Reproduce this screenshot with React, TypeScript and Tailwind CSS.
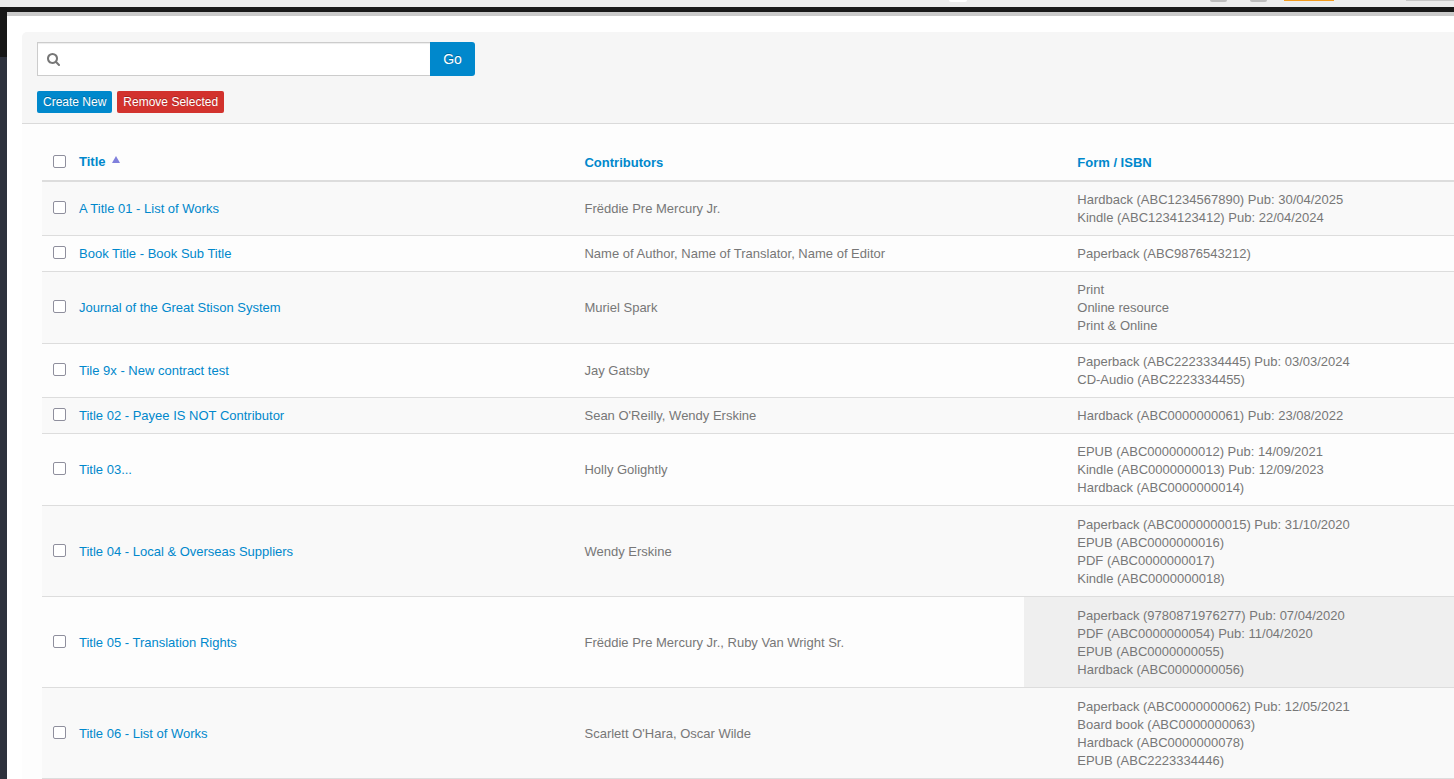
import { useState } from "react";

type Work = { title: string; contributors: string; forms: string[] };

const works: Work[] = [
  {
    title: "A Title 01 - List of Works",
    contributors: "Frëddie Pre Mercury Jr.",
    forms: ["Hardback (ABC1234567890) Pub: 30/04/2025", "Kindle (ABC1234123412) Pub: 22/04/2024"],
  },
  {
    title: "Book Title - Book Sub Title",
    contributors: "Name of Author, Name of Translator, Name of Editor",
    forms: ["Paperback (ABC9876543212)"],
  },
  {
    title: "Journal of the Great Stison System",
    contributors: "Muriel Spark",
    forms: ["Print", "Online resource", "Print & Online"],
  },
  {
    title: "Tile 9x - New contract test",
    contributors: "Jay Gatsby",
    forms: ["Paperback (ABC2223334445) Pub: 03/03/2024", "CD-Audio (ABC2223334455)"],
  },
  {
    title: "Title 02 - Payee IS NOT Contributor",
    contributors: "Sean O'Reilly, Wendy Erskine",
    forms: ["Hardback (ABC0000000061) Pub: 23/08/2022"],
  },
  {
    title: "Title 03...",
    contributors: "Holly Golightly",
    forms: [
      "EPUB (ABC0000000012) Pub: 14/09/2021",
      "Kindle (ABC0000000013) Pub: 12/09/2023",
      "Hardback (ABC0000000014)",
    ],
  },
  {
    title: "Title 04 - Local & Overseas Suppliers",
    contributors: "Wendy Erskine",
    forms: [
      "Paperback (ABC0000000015) Pub: 31/10/2020",
      "EPUB (ABC0000000016)",
      "PDF (ABC0000000017)",
      "Kindle (ABC0000000018)",
    ],
  },
  {
    title: "Title 05 - Translation Rights",
    contributors: "Frëddie Pre Mercury Jr., Ruby Van Wright Sr.",
    forms: [
      "Paperback (9780871976277) Pub: 07/04/2020",
      "PDF (ABC0000000054) Pub: 11/04/2020",
      "EPUB (ABC0000000055)",
      "Hardback (ABC0000000056)",
    ],
  },
  {
    title: "Title 06 - List of Works",
    contributors: "Scarlett O'Hara, Oscar Wilde",
    forms: [
      "Paperback (ABC0000000062) Pub: 12/05/2021",
      "Board book (ABC0000000063)",
      "Hardback (ABC0000000078)",
      "EPUB (ABC2223334446)",
    ],
  },
];

const rowHeights = ["h-[36px]", "h-[54px]", "h-[72px]", "h-[91px]"];
const highlighted = "Title 05 - Translation Rights";

function Tick({ label, checked, onChange }: { label: string; checked: boolean; onChange: () => void }) {
  return (
    <input
      type="checkbox"
      aria-label={label}
      checked={checked}
      onChange={onChange}
      className="block size-[13px] appearance-none rounded-[2px] border border-[#8f8f9d] bg-white checked:border-[#0088cc] checked:bg-[#0088cc]"
    />
  );
}

function BrowserEdge() {
  return (
    <div className="flex h-[7px] shrink-0 items-start justify-end overflow-hidden bg-[#ececec]">
      <span className="mr-[243px] h-[2px] w-[18px] rounded-b-full bg-white" />
      <span className="mr-[23px] h-[2px] w-[17px] rounded-b-full bg-[#bdbdbd]" />
      <span className="mr-[17px] h-[2px] w-[17px] rounded-b-full bg-[#bdbdbd]" />
      <span className="mr-[72px] h-px w-[50px] bg-[#f29b1d]" />
      <span className="h-px w-[48px] bg-[#c8c8c8]" />
    </div>
  );
}

function SearchBar() {
  return (
    <form onSubmit={(e) => e.preventDefault()} className="flex">
      <label className="flex h-[34px] w-[393px] items-center border border-r-0 border-[#cccccc] bg-white pl-[9px] shadow-[inset_0_1px_1px_rgba(0,0,0,0.075)]">
        <svg viewBox="0 0 1664 1664" className="size-[13px] shrink-0 fill-[#777777]" aria-hidden="true">
          <path d="M1152 704q0-185-131.500-316.500T704 256 387.500 387.500 256 704t131.500 316.500T704 1152t316.500-131.500T1152 704zm512 832q0 52-38 90t-90 38q-54 0-90-38l-343-342q-179 124-399 124-143 0-273.500-55.500t-225-150-150-225T0 704t55.500-273.500 150-225 225-150T704 0t273.500 55.500 225 150 150 225T1408 704q0 220-124 399l343 343q37 37 37 90z" />
        </svg>
        <input type="text" aria-label="Search titles" className="h-full min-w-0 flex-1 px-2 text-[14px] text-[#555555] outline-none" />
      </label>
      <button type="submit" className="h-[34px] w-[45px] rounded-r-[3px] bg-[#0088cc] text-[14px] text-white [text-shadow:0_-1px_0_rgba(0,0,0,0.25)]">
        Go
      </button>
    </form>
  );
}

export default function App() {
  const [selected, setSelected] = useState<string[]>([]);
  const toggle = (t: string) => setSelected((s) => (s.includes(t) ? s.filter((x) => x !== t) : [...s, t]));
  const all = selected.length === works.length;

  return (
    <div className="flex h-screen flex-col overflow-hidden bg-white font-['Liberation_Sans',Arial,sans-serif] text-[13px] leading-[18px] text-[#777777]">
      <BrowserEdge />
      <div className="flex min-h-0 flex-1">
        <aside className="flex w-[7px] shrink-0 flex-col bg-[#2e323d]">
          <div className="h-[50px] bg-[#171717]" />
        </aside>
        <div className="min-w-0 flex-1">
          <div className="h-[9px] border-b-4 border-[#cacaca] bg-[#191919]" />
          <main className="pt-4 pl-[15px]">
            <header className="rounded-tl-[5px] border-b border-[#dadada] bg-[#f6f6f6] px-[15px] py-[10px]">
              <SearchBar />
              <div className="mt-[15px] flex gap-[5px]">
                <button type="button" className="h-[22px] rounded-[2px] bg-[#0088cc] px-[6px] text-[12px] text-white [text-shadow:0_-1px_0_rgba(0,0,0,0.25)]">
                  Create New
                </button>
                <button type="button" className="h-[22px] rounded-[2px] bg-[#d2322d] px-[6px] text-[12px] text-white [text-shadow:0_-1px_0_rgba(0,0,0,0.25)]">
                  Remove Selected
                </button>
              </div>
            </header>
            <section className="bg-[#fdfdfd] pt-5 pl-5">
              <table className="w-full table-fixed border-collapse text-left">
                <colgroup>
                  <col className="w-[32px]" />
                  <col className="w-[32.4%]" />
                  <col className="w-[34.9%]" />
                  <col />
                </colgroup>
                <thead>
                  <tr className="h-[37px] border-b-2 border-[#dddddd] text-[#0088cc]">
                    <th className="pb-px pl-[11px]">
                      <Tick label="Select all" checked={all} onChange={() => setSelected(all ? [] : works.map((w) => w.title))} />
                    </th>
                    <th className="pb-px pl-[5px]" aria-sort="ascending">
                      <a href="#title" className="flex gap-[6px]">
                        Title
                        <svg viewBox="0 0 8 7" className="mt-[3px] h-[7px] w-[8px] fill-[#8080dc]" aria-hidden="true">
                          <path d="M4 0 8 7H0z" />
                        </svg>
                      </a>
                    </th>
                    <th className="pt-px pl-[53px]">
                      <a href="#contributors">Contributors</a>
                    </th>
                    <th className="pt-px pl-[53px]">
                      <a href="#form">Form / ISBN</a>
                    </th>
                  </tr>
                </thead>
                <tbody>
                  {works.map((w) => (
                    <tr key={w.title} className={`border-b border-[#dddddd] odd:bg-[#f9f9f9] ${rowHeights[w.forms.length - 1]}`}>
                      <td className="pb-px pl-[11px]">
                        <Tick label={`Select ${w.title}`} checked={selected.includes(w.title)} onChange={() => toggle(w.title)} />
                      </td>
                      <td className="pt-[2px] pl-[5px]">
                        <a href="#work" className="text-[#0088cc]">
                          {w.title}
                        </a>
                      </td>
                      <td className="pt-[2px] pl-[53px]">{w.contributors}</td>
                      <td className={w.title === highlighted ? "bg-[#efefef] pt-[2px] pl-[53px]" : "pt-[2px] pl-[53px]"}>
                        {w.forms.map((f) => (
                          <div key={f}>{f}</div>
                        ))}
                      </td>
                    </tr>
                  ))}
                </tbody>
              </table>
            </section>
          </main>
        </div>
      </div>
    </div>
  );
}
